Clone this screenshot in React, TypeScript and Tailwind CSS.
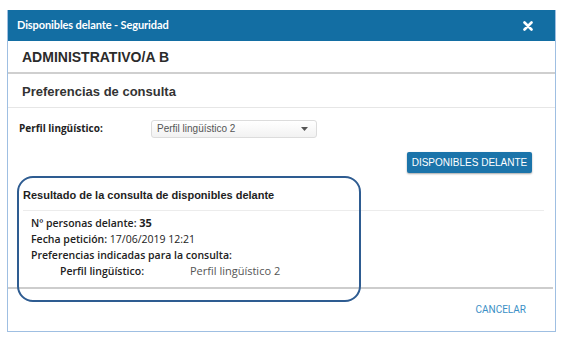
import React from 'react';

const sans = { fontFamily: '"Liberation Sans", Arial, sans-serif' };
const segoe = { fontFamily: '"Open Sans", "Noto Sans", sans-serif' };

export default function App() {
  return (
    <div className="w-[567px] h-[337px] bg-white relative overflow-hidden" style={sans}>
      <div className="absolute left-[7px] top-[10px] w-[549px] h-[322px] border border-[#9fbfe2] border-t-0 flex flex-col">
        {/* cabecera */}
        <div className="h-[31px] bg-[#136ea3] flex items-center justify-between pl-[9px] pr-[22px] shrink-0">
          <span className="text-white text-[11px] font-bold tracking-[-0.1px]" style={{ fontFamily: 'Lato, sans-serif' }}>
            Disponibles delante - Seguridad
          </span>
          <svg width="10" height="10" viewBox="0 0 10 10">
            <path d="M1.5 1.5 L8.5 8.5 M8.5 1.5 L1.5 8.5" stroke="white" strokeWidth="2.6" strokeLinecap="round" />
          </svg>
        </div>

        <div className="h-[33px] flex items-center pl-[14px] pt-[2px] border-b-2 border-[#cfcfcf] shrink-0">
          <span className="text-[14px] font-bold text-[#2b2b2b]">ADMINISTRATIVO/A B</span>
        </div>

        <div className="h-[34px] flex items-center pl-[14px] pt-[2px] border-b border-[#e6e6e6] shrink-0">
          <span className="text-[13px] font-bold text-[#333]">Preferencias de consulta</span>
        </div>

        <div className="flex items-center h-[40px] pt-[1px] shrink-0">
          <span className="w-[143px] pl-[11px] text-[10px] font-bold text-[#222]" style={segoe}>Perfil lingüístico:</span>
          <div className="w-[166px] h-[18px] border border-[#dcdcdc] rounded-[3px] bg-gradient-to-b from-white to-[#f2f2f2] flex items-center justify-between pl-[5px] pr-[8px]">
            <span className="text-[10px] text-[#555]">Perfil lingüístico 2</span>
            <svg width="7" height="4" viewBox="0 0 7 4"><path d="M0 0 H7 L3.5 4 Z" fill="#555" /></svg>
          </div>
        </div>

        <div className="flex justify-end pr-[23px] pt-[4px] shrink-0">
          <button className="w-[125px] h-[21px] bg-[#1b74aa] rounded-[2px] shadow-[0_1px_2px_rgba(0,0,0,0.35)] text-white text-[10px]">
            DISPONIBLES DELANTE
          </button>
        </div>

        <div className="pl-[15px] pt-[14px] pr-[11px] shrink-0">
          <div className="text-[11px] font-bold text-[#1e1e1e] pb-[6px] border-b border-[#ececec]">
            Resultado de la consulta de disponibles delante
          </div>
        </div>

        <div className="pl-[23px] pt-[5px] flex flex-col gap-[2px] text-[10.5px] text-[#222] leading-[14px] shrink-0" style={segoe}>
          <div><span className="font-semibold">Nº personas delante:</span> <span className="font-bold text-[11px]">35</span></div>
          <div><span className="font-semibold">Fecha petición:</span> 17/06/2019 12:21</div>
          <div className="font-semibold">Preferencias indicadas para la consulta:</div>
          <div className="flex items-center">
            <span className="w-[159px] pl-[29px] font-semibold">Perfil lingüístico:</span>
            <span className="text-[11px] text-[#555]">Perfil lingüístico 2</span>
          </div>
        </div>

        <div className="mt-[9px] mr-[2px] border-b-2 border-[#cdcdcd] shrink-0" />

        <div className="flex-1 flex items-center justify-end pr-[29px]">
          <span className="text-[10px] text-[#3b8fc6]" style={{ fontFamily: 'Roboto, sans-serif' }}>CANCELAR</span>
        </div>
      </div>

      {/* marca de anotación */}
      <div className="absolute left-[17px] top-[176px] w-[344px] h-[126px] border-2 border-[#2e5c91] rounded-[16px] pointer-events-none" />
    </div>
  );
}
